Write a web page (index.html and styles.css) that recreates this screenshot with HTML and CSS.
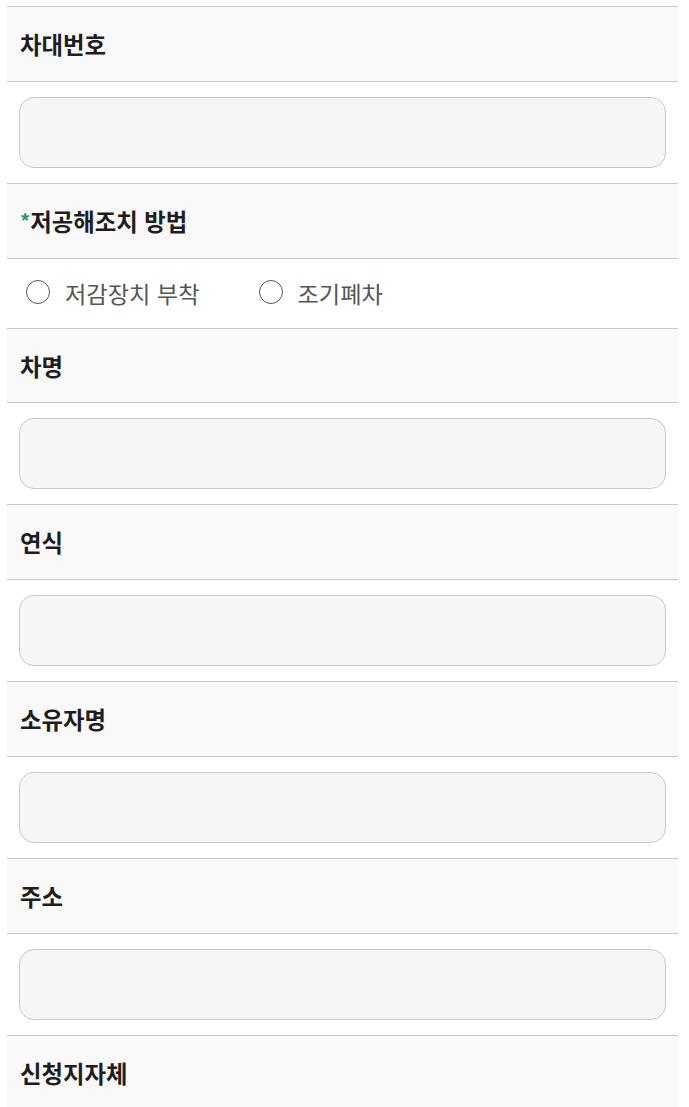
FILE: index.html
```html
<!DOCTYPE html>
<html lang="ko">
<head>
  <meta charset="UTF-8">
  <meta name="viewport" content="width=device-width, initial-scale=1.0">
  <title>차량 정보 입력</title>
  <link rel="stylesheet" href="styles.css">
</head>
<body>
  <div class="form-table">
    <div class="row-title">차대번호</div>
    <div class="row-field"><input type="text" class="text-input"></div>

    <div class="row-title"><span class="required">*</span>저공해조치 방법</div>
    <div class="row-radio">
      <label class="radio-item"><input type="radio" name="method"><span>저감장치 부착</span></label>
      <label class="radio-item"><input type="radio" name="method"><span>조기폐차</span></label>
    </div>

    <div class="row-title">차명</div>
    <div class="row-field"><input type="text" class="text-input"></div>

    <div class="row-title">연식</div>
    <div class="row-field"><input type="text" class="text-input"></div>

    <div class="row-title">소유자명</div>
    <div class="row-field"><input type="text" class="text-input"></div>

    <div class="row-title">주소</div>
    <div class="row-field"><input type="text" class="text-input"></div>

    <div class="row-title">신청지자체</div>
  </div>
</body>
</html>
```

FILE: styles.css
```css
body {
  margin: 0;
  padding: 6px 11px 0 7px;
  font-family: "Noto Sans CJK KR", "Noto Sans", sans-serif;
  color: #222;
  background: #fff;
}
.form-table {
  border-top: 1px solid #c8c8c8;
}
.row-title {
  display: flex;
  align-items: center;
  height: 73.83px;
  padding-left: 13px;
  background-color: #f9f9f9;
  border-bottom: 1px solid #c8c8c8;
  font-size: 23.4px;
  font-weight: 700;
  color: #1e1e1e;
}
.required {
  color: #15a06a;
  font-size: 20px;
}
.row-field {
  padding: 15px 12px;
  border-bottom: 1px solid #c8c8c8;
}
.text-input {
  display: block;
  box-sizing: border-box;
  width: 100%;
  height: 71px;
  margin: 0;
  border: 1px solid #c8c8c8;
  border-radius: 15px;
  background-color: #f6f6f6;
  font-size: 20px;
  font-family: inherit;
  outline: none;
}
.row-radio {
  display: flex;
  align-items: center;
  height: 69px;
  padding-left: 19px;
  border-bottom: 1px solid #c8c8c8;
}
.radio-item {
  display: flex;
  align-items: center;
  margin-right: 59px;
  font-size: 23.2px;
  color: #555;
}
.radio-item input {
  appearance: none;
  width: 24px;
  height: 24px;
  margin: -2px 15px 0 0;
  border: 1px solid #555;
  border-radius: 50%;
  background: #fff;
}
```
